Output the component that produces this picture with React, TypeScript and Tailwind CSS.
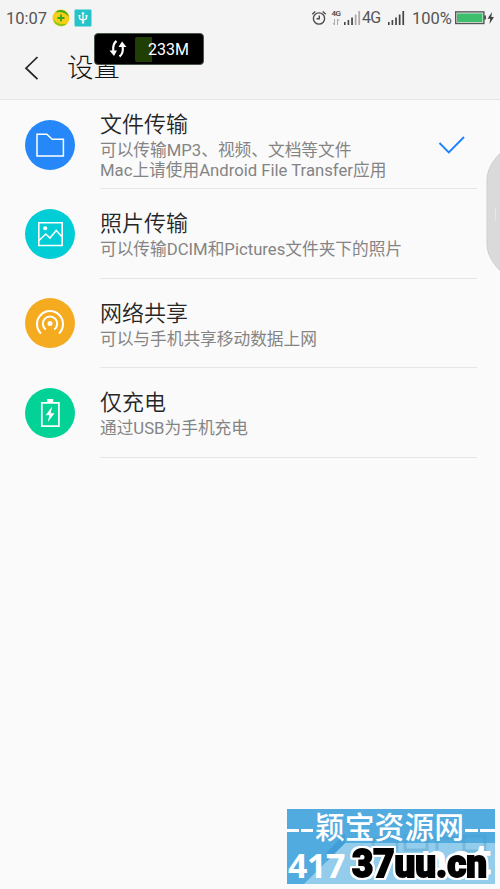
import type { ReactNode } from "react"

type Option = {
    title: string
    lines: string[]
    color: string
    icon: ReactNode
    selected?: boolean
}

const FolderIcon = () => (
    <svg width="50" height="50" viewBox="0 0 50 50" fill="none" stroke="#fff" strokeWidth="1.5">
        <path d="M12 36V14.2h9.800l5.400 5h11.200V36z" />
    </svg>
)

const PhotoIcon = () => (
    <svg width="50" height="50" viewBox="0 0 50 50" fill="none" stroke="#fff" strokeWidth="1.6">
        <path d="M13.800 13.700h23.400v22.800H13.800z" />
        <path d="M14 31.500l6.800-6.500 4.200 4 6.200-7.500 6 6.500" />
        <circle cx="20.2" cy="19.2" r="2" fill="#fff" stroke="none" />
    </svg>
)

const HotspotIcon = () => (
    <svg width="50" height="50" viewBox="0 0 50 50" fill="none" stroke="#fff" strokeWidth="2.1">
        <path d="M16 35.400A13 13 0 1 1 34 35.400" />
        <path d="M20.800 31.500A7.200 7.200 0 1 1 29.200 31.500" />
        <circle cx="25" cy="25.500" r="2.500" fill="#fff" stroke="none" />
    </svg>
)

const BatteryIcon = () => (
    <svg width="50" height="50" viewBox="0 0 50 50" fill="none" stroke="#fff" strokeWidth="1.7">
        <path d="M16.8 14.8h17.1v23.4H16.8z" />
        <path d="M22.2 11h6v3.4h-6z" fill="#fff" stroke="none" />
        <path d="M27.2 18.6l-6.6 8.7h3.7l-1.4 6.6 6.6-8.7h-3.8z" fill="#fff" stroke="none" />
    </svg>
)

const options: Option[] = [
    {
        title: "文件传输",
        lines: ["可以传输MP3、视频、文档等文件", "Mac上请使用Android File Transfer应用"],
        color: "bg-[#2688f8]",
        icon: <FolderIcon />,
        selected: true,
    },
    {
        title: "照片传输",
        lines: ["可以传输DCIM和Pictures文件夹下的照片"],
        color: "bg-[#00cdd6]",
        icon: <PhotoIcon />,
    },
    {
        title: "网络共享",
        lines: ["可以与手机共享移动数据上网"],
        color: "bg-[#f5ab20]",
        icon: <HotspotIcon />,
    },
    {
        title: "仅充电",
        lines: ["通过USB为手机充电"],
        color: "bg-[#03d296]",
        icon: <BatteryIcon />,
    },
]

const Signal = ({ weak }: { weak?: boolean }) => (
    <svg width="17" height="16" viewBox="0 0 17 16" fill="#444">
        <path d="M0 12h1.6v3H0zM3.6 10h1.6v5H3.6zM7.2 7.5h1.7V15H7.2z" />
        <path d="M10.8 4.5h1.7V15h-1.7zM14.4 1h1.7v14h-1.7z" fill={weak ? "#aaa" : "#444"} />
    </svg>
)

const StatusBar = () => (
    <div className="flex h-9 items-center pl-[6px] pr-[5px] text-[16.5px] leading-none text-[#555]">
        <span className="w-[46px] pt-[2px]">10:07</span>
        <svg width="18" height="18" viewBox="0 0 18 18" fill="none">
            <circle cx="9" cy="9" r="8.500" fill="#f6cf18" />
            <path d="M3 3.500A8 8 0 0 1 16.700 8C14 3.500 8.500 2 3 3.500z" fill="#3aad20" />
            <path d="M15 14.500A8 8 0 0 1 1.300 10C4 14.500 9.500 16 15 14.500z" fill="#8bc620" />
            <path d="M9 5.500v7M5.500 9h7" stroke="#35a51c" strokeWidth="1.8" />
        </svg>
        <svg className="ml-[4px]" width="18" height="18" viewBox="0 0 18 18" fill="none" stroke="#fff" strokeWidth="1.3">
            <rect x=".5" y=".5" width="17" height="17" rx="1" fill="#24c4c9" stroke="none" />
            <path d="M9 4v10M5.500 7v2.500L9 11.500l3.500-2V7" />
            <path d="M7.200 5L9 2.700 10.800 5zM7.800 12.500h2.400v2H7.800zM4.500 6h2v1.600h-2zM11.500 6h2v1.600h-2z" fill="#fff" stroke="none" />
        </svg>
        <div className="ml-auto flex items-center">
            <svg className="-mt-px" width="16" height="16" viewBox="0 0 16 16" fill="none" stroke="#4c4c4c" strokeWidth="1.4">
                <circle cx="8" cy="8.500" r="5.600" />
                <path d="M8.300 5.500v3.300H5.500M1.200 4.200L4.300 1.500M14.800 4.200l-3.100-2.700" />
            </svg>
            <div className="ml-[4px] flex w-[10px] flex-col items-center text-[8px] font-medium leading-[8px] tracking-[-0.4px] text-[#444]">
                <span>4G</span>
                <svg width="8" height="8" viewBox="0 0 8 8" fill="none" stroke="#aaa">
                    <path d="M2.500 1v6M.8 5l1.700 2M5.500 7V1M7.200 3L5.500 1" />
                </svg>
            </div>
            <div className="ml-[3px]"><Signal weak /></div>
            <span className="ml-px w-[20px] text-[16px] tracking-[-0.8px]">4G</span>
            <div className="ml-[6px]"><Signal /></div>
            <span className="ml-[7px] w-[43px] pt-[2px]">100%</span>
            <svg width="40" height="14" viewBox="0 0 40 14" fill="none">
                <rect x=".7" y=".900" width="28.200" height="11.600" fill="#f4f4f4" stroke="#555" strokeWidth="1.400" />
                <path d="M2 2.400h25.500v8.700H2z" fill="#3dbe6c" />
                <path d="M29 4.500h2v4h-2z" fill="#555" />
                <path d="M37 1l-4.500 6.800h2.700L34.500 13l4.500-7h-2.700z" fill="#444" />
            </svg>
        </div>
    </div>
)

const Header = () => (
    <div className="flex h-[63px] items-center pl-[24px]">
        <svg width="15" height="24" viewBox="0 0 15 24" fill="none" stroke="#222" strokeWidth="1.700">
            <path d="M13.500 1L2 12.200l11.500 11" />
        </svg>
        <h1 className="ml-[28px] pt-px text-[26.5px] font-light leading-none text-[#111]">设置</h1>
    </div>
)

// small traffic monitor that floats above the title
const SpeedWidget = () => (
    <div className="absolute left-[94px] top-[33px] flex h-[32px] w-[110px] items-center rounded-[4px] border border-[#4a554a] bg-black">
        <svg className="ml-[13px]" width="20" height="18" viewBox="0 0 20 18" fill="none" stroke="#fff" strokeWidth="2.200">
            <path d="M8.500 1C5 3.500 4.800 7 5.300 11M11.500 16.500C15 14 15.200 10.500 14.700 6.500" />
            <path d="M1.500 10.500h7.500L6 16zM10.500 7H18.500L14 1.500z" fill="#fff" stroke="none" />
        </svg>
        <div className="ml-[7px] h-[25px] w-[17px] rounded-l-[2px] bg-[#213f05]" />
        <span className="-ml-[4px] pt-px text-[16px] leading-none text-white">233M</span>
    </div>
)

const OptionRow = ({ option }: { option: Option }) => (
    <div className="flex h-[89.4px] pl-[25px] pr-[23px]">
        <div className={`mt-[19.5px] size-[50px] shrink-0 rounded-full ${option.color}`}>{option.icon}</div>
        <div className="ml-[25px] flex flex-1 border-b border-[#e6e6e6]">
            <div className={option.selected ? "pt-[11px]" : "pt-[21px]"}>
                <h2 className="mb-[2px] text-[22px] font-[350] leading-[28px] text-[#262626]">{option.title}</h2>
                {option.lines.map((line) => (
                    <p key={line} className="whitespace-nowrap text-[16.7px] leading-[20px] text-[#848484]">{line}</p>
                ))}
            </div>
            {option.selected && (
                <svg className="ml-auto mr-[11px] mt-[35px]" width="28" height="20" viewBox="0 0 28 20" fill="none" stroke="#1b83fb" strokeWidth="1.900">
                    <path d="M1.500 8l9.300 9.300L26 2" />
                </svg>
            )}
        </div>
    </div>
)

const EdgeHandle = () => (
    <svg className="absolute right-0 top-[152px]" width="14" height="121" viewBox="0 0 14 121">
        <path d="M14.500 1C6 9 1 19 1 28v64c0 9 5 19 13.500 27z" fill="#dadada" stroke="#cfcfcf" />
        <path d="M9.500 56v13" stroke="#e8e8e8" />
    </svg>
)

const SiteBadge = () => (
    <div className="absolute left-[287px] top-[809px] h-[75px] w-[208px] bg-[#51abdf]">
        <svg className="absolute inset-0" width="208" height="75" viewBox="0 0 208 75">
            <path d="M17 75L58 34h150v41z" fill="#94cdec" />
            <path d="M40 52V43l18-18v9z" fill="#3f9ed8" />
            <g fill="none" stroke="#459acb" strokeWidth="3" opacity=".4">
                <path d="M86 30h24v12H86zM118 27h22v14h-22zM146 29h26M150 29v12M177 27h21v15h-21z" />
            </g>
        </svg>
        <div className="absolute left-0 top-[3px] flex w-[208px] items-center text-[29.8px] leading-[32px] text-white">
            <span className="mt-[4px] h-[3px] w-[12px] bg-white" />
            <span className="ml-[2px] mt-[4px] h-[3px] w-[12px] bg-white" />
            <span className="ml-[2px] font-['Liberation_Serif','Noto_Sans_CJK_SC',serif] font-medium">颖宝资源网</span>
            <span className="ml-px mt-[4px] h-[3px] w-[13px] bg-white" />
            <span className="ml-[2px] mt-[4px] h-[3px] flex-1 bg-white" />
        </div>
        <span className="absolute left-px top-[38px] font-['Open_Sans'] text-[34px] font-bold leading-[36px] tracking-[-0.5px] text-white">417</span>
        <span className="absolute right-[3px] top-[28px] font-['Open_Sans'] text-[43px] font-bold leading-[44px] text-white">net</span>
        <svg className="absolute inset-0 overflow-visible [filter:drop-shadow(2px_0_0_#fff)_drop-shadow(-2px_0_0_#fff)_drop-shadow(0_2px_0_#fff)_drop-shadow(0_-2px_0_#fff)]" width="208" height="75" viewBox="0 0 208 75">
            <text x="65" y="68" textLength="135" lengthAdjust="spacingAndGlyphs" fill="#000" stroke="#000" strokeWidth="1.800" className="font-['Roboto'] text-[38.5px] font-black">37uu.cn</text>
        </svg>
    </div>
)

const App = () => {
    return (
        <div className="relative h-[889px] w-[500px] overflow-hidden bg-[#fafafa] font-['Roboto','Noto_Sans_CJK_SC',sans-serif]">
            <div className="h-[100px] border-b border-[#e4e4e4] bg-[#f4f4f4]">
                <StatusBar />
                <Header />
            </div>
            <div>
                {options.map((option) => (
                    <OptionRow key={option.title} option={option} />
                ))}
            </div>
            <SpeedWidget />
            <EdgeHandle />
            <SiteBadge />
        </div>
    )
}

export default App
